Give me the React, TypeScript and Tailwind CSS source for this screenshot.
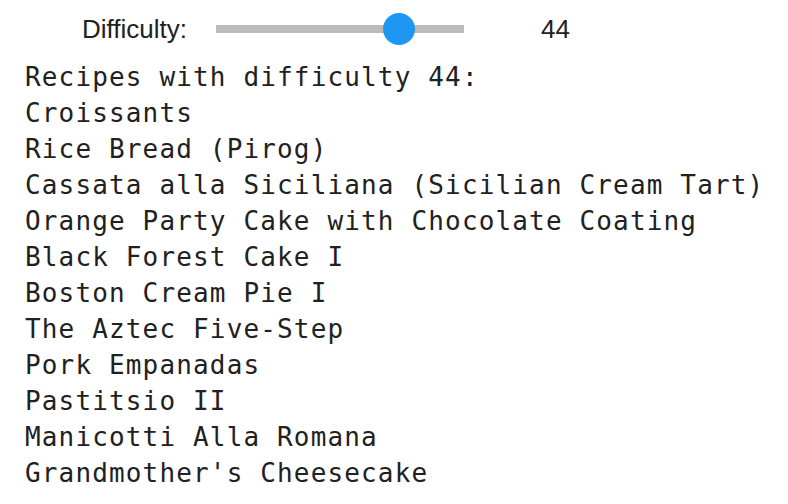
const RECIPES = [
  'Croissants',
  'Rice Bread (Pirog)',
  'Cassata alla Siciliana (Sicilian Cream Tart)',
  'Orange Party Cake with Chocolate Coating',
  'Black Forest Cake I',
  'Boston Cream Pie I',
  'The Aztec Five-Step',
  'Pork Empanadas',
  'Pastitsio II',
  'Manicotti Alla Romana',
  "Grandmother's Cheesecake",
]

export default function App() {
  const difficulty = 44
  return (
    <div className="min-h-[504px] w-[788px] bg-white text-[#212121]">
      {/* slider row */}
      <div className="flex h-[58px] items-center font-['Liberation_Sans',Arial,sans-serif] text-[26px]">
        <div className="w-[187px] text-right leading-none">Difficulty:</div>
        <div className="relative ml-[29px] h-[8px] w-[248px] bg-[#bbbbbb]">
          <span className="absolute left-[167px] top-[-12px] h-[32px] w-[32px] rounded-full bg-[#1e96f3]" />
        </div>
        <div className="ml-[77px] leading-none">{difficulty}</div>
      </div>

      {/* output */}
      <pre className="pl-[25px] pt-[1px] font-['DejaVu_Sans_Mono',monospace] text-[26px] leading-[36px] tracking-[1.15px]">
        {`Recipes with difficulty ${difficulty}:\n`}
        {RECIPES.join('\n')}
      </pre>
    </div>
  )
}
